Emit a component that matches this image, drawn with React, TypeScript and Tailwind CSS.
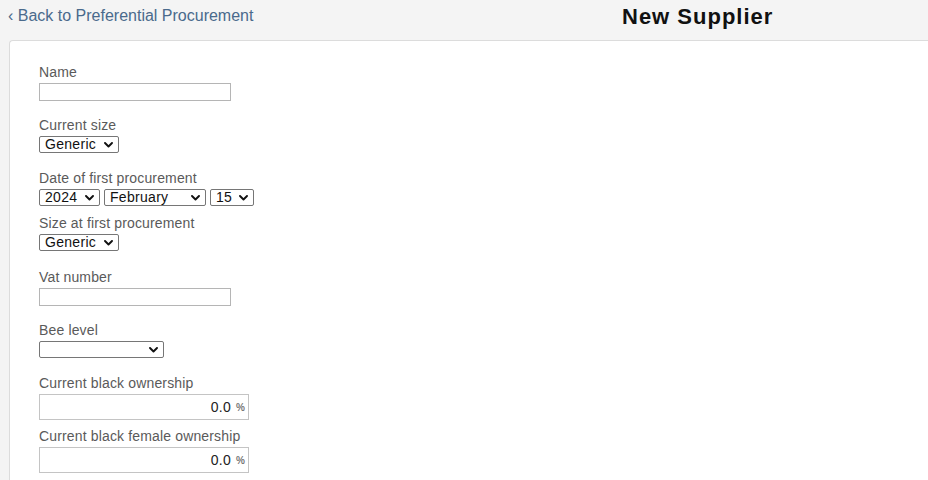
import React from 'react'

function Chevron() {
  return (
    <svg width="9" height="6" viewBox="0 0 9 6" className="shrink-0">
      <path d="M1 1 L4.5 4.5 L8 1" fill="none" stroke="#111" strokeWidth="1.9" strokeLinecap="round" strokeLinejoin="round" />
    </svg>
  )
}

function Select({ value, width }: { value: string; width: string }) {
  return (
    <div className={`inline-flex items-center justify-between h-[17px] border border-[#767676] rounded-[2px] bg-white pl-[5px] pr-[5px] ${width}`}>
      <span className="text-[14px] leading-[15px] text-[#111] tracking-[0.3px]">{value}</span>
      <Chevron />
    </div>
  )
}

function Field({ label, h, children }: { label: string; h: string; children: React.ReactNode }) {
  return (
    <div className={`flex flex-col items-start ${h}`}>
      <label className="text-[14px] leading-[16px] text-[#5a5a5a] tracking-[0.15px]">{label}</label>
      <div className="mt-[3px] flex gap-[4px]">{children}</div>
    </div>
  )
}

function TextInput() {
  return <div className="w-[192px] h-[18px] border border-[#b5b5b5] bg-white" />
}

function PercentInput() {
  return (
    <div className="w-[210px] h-[26px] border border-[#c4c4c4] bg-white flex items-center justify-end pr-[3px] gap-[5px]">
      <span className="text-[14px] text-[#222] tracking-[0.3px]">0.0</span>
      <span className="text-[10px] font-bold text-[#777]">%</span>
    </div>
  )
}

export default function App() {
  return (
    <div className="w-[928px] h-[480px] overflow-hidden bg-[#f4f4f4] font-['Liberation_Sans',Arial,sans-serif]">
      <div className="flex h-[40px]">
        <a className="w-[622px] pl-[8px] pt-[7px] text-[16px] leading-[18px] text-[#4a6a8c]">
          ‹ Back to Preferential Procurement
        </a>
        <h1 className="pt-[5px] text-[22px] leading-[24px] font-bold text-[#111] tracking-[1px]">New Supplier</h1>
      </div>
      <div className="ml-[9px] h-[440px] bg-white border-l border-t border-[#dcdcdc] rounded-tl-[4px] pl-[29px] pt-[23px]">
        <Field label="Name" h="h-[53px]">
          <TextInput />
        </Field>
        <Field label="Current size" h="h-[53px]">
          <Select value="Generic" width="w-[80px]" />
        </Field>
        <Field label="Date of first procurement" h="h-[45px]">
          <Select value="2024" width="w-[61px]" />
          <Select value="February" width="w-[102px]" />
          <Select value="15" width="w-[44px]" />
        </Field>
        <Field label="Size at first procurement" h="h-[54px]">
          <Select value="Generic" width="w-[80px]" />
        </Field>
        <Field label="Vat number" h="h-[53px]">
          <TextInput />
        </Field>
        <Field label="Bee level" h="h-[53px]">
          <Select value="" width="w-[125px]" />
        </Field>
        <Field label="Current black ownership" h="h-[53px]">
          <PercentInput />
        </Field>
        <Field label="Current black female ownership" h="h-[53px]">
          <PercentInput />
        </Field>
      </div>
    </div>
  )
}
